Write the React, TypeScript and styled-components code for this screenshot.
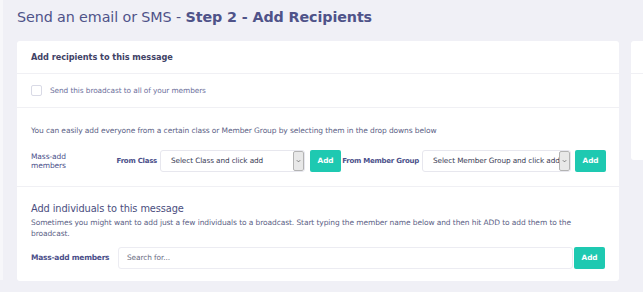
import React from "react"
import styled, { createGlobalStyle } from "styled-components"

const GlobalStyle = createGlobalStyle`
  html, body {
    margin: 0;
    padding: 0;
    background: #f0f0f6;
    font-family: "DejaVu Sans", "Open Sans", sans-serif;
  }
`

const Page = styled.div`
  position: relative;
  width: 643px;
  height: 292px;
  overflow: hidden;
  background: #f0f0f6;
  padding: 6px 0 0 17px;
  box-sizing: border-box;
`

const EdgeStrip = styled.div`
  position: absolute;
  left: 0;
  top: 0;
  bottom: 12px;
  width: 3px;
  background: #f7f7fa;
`

const Title = styled.h1`
  margin: 0;
  font-size: 14.3px;
  line-height: 22px;
  font-weight: 400;
  color: #4f5389;
  letter-spacing: -0.1px;
  white-space: nowrap;

  & b {
    font-weight: 700;
  }
`

const Columns = styled.div`
  display: flex;
  gap: 12px;
  margin-top: 13px;
  align-items: flex-start;
`

const Card = styled.div`
  width: 602px;
  flex-shrink: 0;
  background: #ffffff;
  border-radius: 3px;
`

const SideCard = styled.div`
  width: 40px;
  flex-shrink: 0;
  height: 119px;
  background: #ffffff;
  border-radius: 3px;

  &::before {
    content: "";
    display: block;
    height: 32px;
    border-bottom: 1px solid #f0f0f4;
  }
`

const Section = styled.div<{ $pt?: number; $h?: number }>`
  padding: ${(p) => p.$pt ?? 0}px 14px 0 14px;
  height: ${(p) => (p.$h ? `${p.$h}px` : "auto")};
  box-sizing: border-box;
  border-bottom: 1px solid #f0f0f4;
  display: flex;
  flex-direction: column;
  justify-content: center;

  &:last-child {
    border-bottom: none;
  }
`

const CardHeading = styled.div`
  font-size: 8.2px;
  font-weight: 700;
  color: #3f4266;
  letter-spacing: -0.05px;
`

const CheckLine = styled.label`
  display: flex;
  align-items: center;
  gap: 8px;
  font-size: 7.4px;
  color: #6d6f9c;
  letter-spacing: -0.1px;
`

const Box = styled.span`
  width: 9px;
  height: 9px;
  border: 1px solid #d9dae6;
  border-radius: 2px;
  background: #fff;
`

const Lead = styled.div`
  font-size: 7.5px;
  color: #5c5f86;
  letter-spacing: -0.1px;
  line-height: 11px;
`

const ControlRow = styled.div<{ $mt: number }>`
  display: flex;
  align-items: center;
  margin-top: ${(p) => p.$mt}px;
  height: 22px;
`

const RowLabel = styled.div<{ $w: number; $bold?: boolean }>`
  width: ${(p) => p.$w}px;
  flex-shrink: 0;
  font-size: 7.5px;
  line-height: 9px;
  font-weight: ${(p) => (p.$bold ? 700 : 500)};
  color: #4b4f8a;
  letter-spacing: ${(p) => (p.$bold ? "-0.25px" : "-0.1px")};
  white-space: nowrap;
`

const FieldLabel = styled.div<{ $w: number }>`
  width: ${(p) => p.$w}px;
  flex-shrink: 0;
  text-align: right;
  font-size: 7px;
  font-weight: 700;
  color: #4b4f8a;
  letter-spacing: -0.25px;
  white-space: nowrap;
`

const Select = styled.div<{ $w: number; $ml: number }>`
  width: ${(p) => p.$w}px;
  margin-left: ${(p) => p.$ml}px;
  height: 22px;
  box-sizing: border-box;
  display: flex;
  align-items: stretch;
  border: 1px solid #e7e7ee;
  border-radius: 3px;
  background: #fff;
  overflow: hidden;
  flex-shrink: 0;
`

const SelectText = styled.div`
  flex: 1;
  display: flex;
  align-items: center;
  padding-left: 10px;
  font-size: 7.3px;
  color: #3a3c55;
  letter-spacing: -0.1px;
  white-space: nowrap;
  overflow: hidden;
`

const Arrow = styled.div`
  width: 9px;
  flex-shrink: 0;
  display: flex;
  align-items: center;
  justify-content: center;
  background: #e8e8e8;
  border: 1px solid #b3b3b3;
  border-radius: 2px;
`

const AddButton = styled.button<{ $ml: number }>`
  width: 31px;
  height: 22px;
  margin-left: ${(p) => p.$ml}px;
  flex-shrink: 0;
  padding: 0;
  border: none;
  border-radius: 2px;
  background: #1ec9b1;
  color: #fff;
  font-family: inherit;
  font-size: 7.3px;
  font-weight: 700;
  letter-spacing: -0.1px;
`

const SubHeading = styled.div`
  font-size: 9.8px;
  font-weight: 500;
  color: #4a4d7e;
  letter-spacing: -0.1px;
  line-height: 14px;
  margin-bottom: 1px;
`

const Search = styled.div`
  width: 456px;
  height: 22px;
  margin-left: 11px;
  box-sizing: border-box;
  border: 1px solid #ececf2;
  border-radius: 3px;
  display: flex;
  align-items: center;
  padding-left: 8px;
  font-size: 7.4px;
  color: #6a6c82;
  letter-spacing: -0.1px;
`

const Chevron = () => (
  <svg width="5" height="4" viewBox="0 0 5 4">
    <path d="M0.8 1.2 L2.5 2.9 L4.2 1.2" fill="none" stroke="#666" strokeWidth="0.8" />
  </svg>
)

export default function App() {
  return (
    <>
      <GlobalStyle />
      <Page>
        <EdgeStrip />
        <Title>
          Send an email or SMS - <b>Step 2 - Add Recipients</b>
        </Title>
        <Columns>
          <Card>
            <Section $h={33}>
              <CardHeading>Add recipients to this message</CardHeading>
            </Section>
            <Section $h={34}>
              <CheckLine>
                <Box />
                Send this broadcast to all of your members
              </CheckLine>
            </Section>
            <Section $h={79} $pt={2}>
              <Lead>
                You can easily add everyone from a certain class or Member Group by selecting them in the drop downs below
              </Lead>
              <ControlRow $mt={14}>
                <RowLabel $w={50}>
                  Mass-add
                  <br />
                  members
                </RowLabel>
                <FieldLabel $w={76}>From Class</FieldLabel>
                <Select $w={145} $ml={3}>
                  <SelectText>Select Class and click add</SelectText>
                  <Arrow>
                    <Chevron />
                  </Arrow>
                </Select>
                <AddButton $ml={5}>Add</AddButton>
                <FieldLabel $w={78}>From Member Group</FieldLabel>
                <Select $w={149} $ml={3}>
                  <SelectText>Select Member Group and click add</SelectText>
                  <Arrow>
                    <Chevron />
                  </Arrow>
                </Select>
                <AddButton $ml={4}>Add</AddButton>
              </ControlRow>
            </Section>
            <Section $h={94} $pt={2}>
              <SubHeading>Add individuals to this message</SubHeading>
              <Lead>
                Sometimes you might want to add just a few individuals to a broadcast. Start typing the member name below and then hit ADD to add them to the broadcast.
              </Lead>
              <ControlRow $mt={8}>
                <RowLabel $w={76} $bold>
                  Mass-add members
                </RowLabel>
                <Search>Search for...</Search>
                <AddButton $ml={1}>Add</AddButton>
              </ControlRow>
            </Section>
          </Card>
          <SideCard />
        </Columns>
      </Page>
    </>
  )
}
